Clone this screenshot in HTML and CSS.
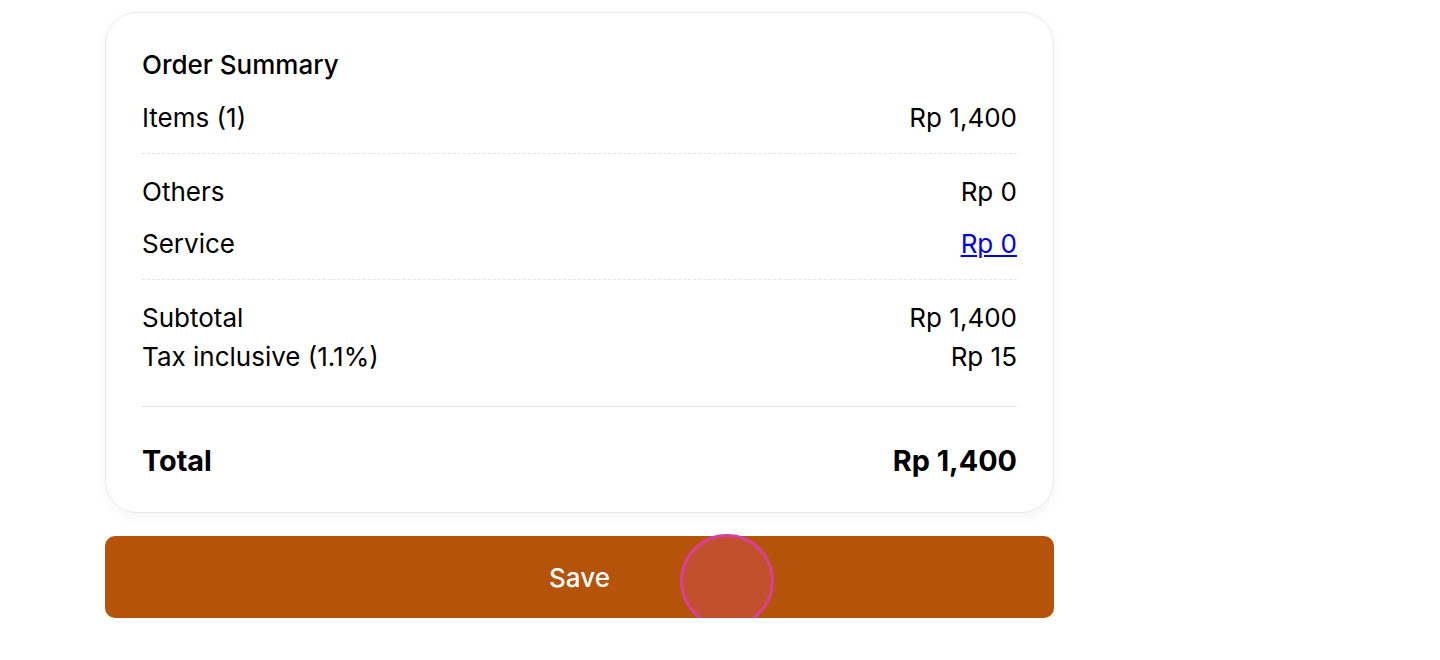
FILE: index.html
```html
<!DOCTYPE html>
<html lang="en">
<head>
<meta charset="utf-8">
<title>Order Summary</title>
<link rel="stylesheet" href="styles.css">
</head>
<body>
<main class="page">
  <section class="card">
    <h2 class="title">Order Summary</h2>
    <div class="row"><span>Items (1)</span><span>Rp 1,400</span></div>
    <hr class="dash">
    <div class="row"><span>Others</span><span>Rp 0</span></div>
    <div class="row gap"><span>Service</span><a href="#" class="link">Rp 0</a></div>
    <hr class="dash">
    <div class="row"><span>Subtotal</span><span>Rp 1,400</span></div>
    <div class="row"><span>Tax inclusive (1.1%)</span><span>Rp 15</span></div>
    <hr class="solid">
    <div class="row total"><span>Total</span><span>Rp 1,400</span></div>
  </section>
  <div class="actions">
    <button class="save">Save</button>
    <span class="touch"></span>
  </div>
</main>
</body>
</html>
```

FILE: styles.css
```css
html, body {
  margin: 0;
  padding: 0;
  background: #ffffff;
}
body {
  font-family: Inter, "Noto Sans", "Liberation Sans", sans-serif;
  color: #000000;
}
.page {
  width: 949px;
  margin-left: 105px;
  padding-top: 12px;
}
.card {
  box-sizing: border-box;
  border: 1px solid #e8e9f0;
  border-radius: 32px;
  background: #fff;
  box-shadow: 0 4px 14px rgba(0, 0, 0, 0.04);
  padding: 32.5px 36px 30px 36px;
}
.title {
  margin: 0 0 14.6px 0;
  font-size: 26px;
  line-height: 38.4px;
  font-weight: 500;
}
.row {
  display: flex;
  justify-content: space-between;
  font-size: 26px;
  line-height: 38.4px;
}
.row.gap {
  margin-top: 13.6px;
}
.link {
  color: #0000ee;
  text-decoration: underline;
}
.dash {
  border: 0;
  border-top: 1px dashed #e2e3e8;
  margin: 16px 0 19px 0;
}
.solid {
  border: 0;
  border-top: 1px solid #e2e3e8;
  margin: 30px 0 32px 0;
}
.total {
  font-size: 28.8px;
  line-height: 43.2px;
  font-weight: 700;
}
.actions {
  position: relative;
  margin-top: 23px;
}
.save {
  display: block;
  width: 100%;
  height: 82px;
  border: 0;
  border-radius: 10px;
  background: #b45309;
  color: #fff;
  font-family: Inter, "Noto Sans", "Liberation Sans", sans-serif;
  font-size: 26px;
  font-weight: 500;
  cursor: pointer;
}
.touch {
  position: absolute;
  left: 574.5px;
  top: -2px;
  width: 88px;
  height: 88px;
  border: 3px solid #d6409a;
  border-radius: 50%;
  background: rgba(236, 72, 153, 0.25);
  pointer-events: none;
}
```
